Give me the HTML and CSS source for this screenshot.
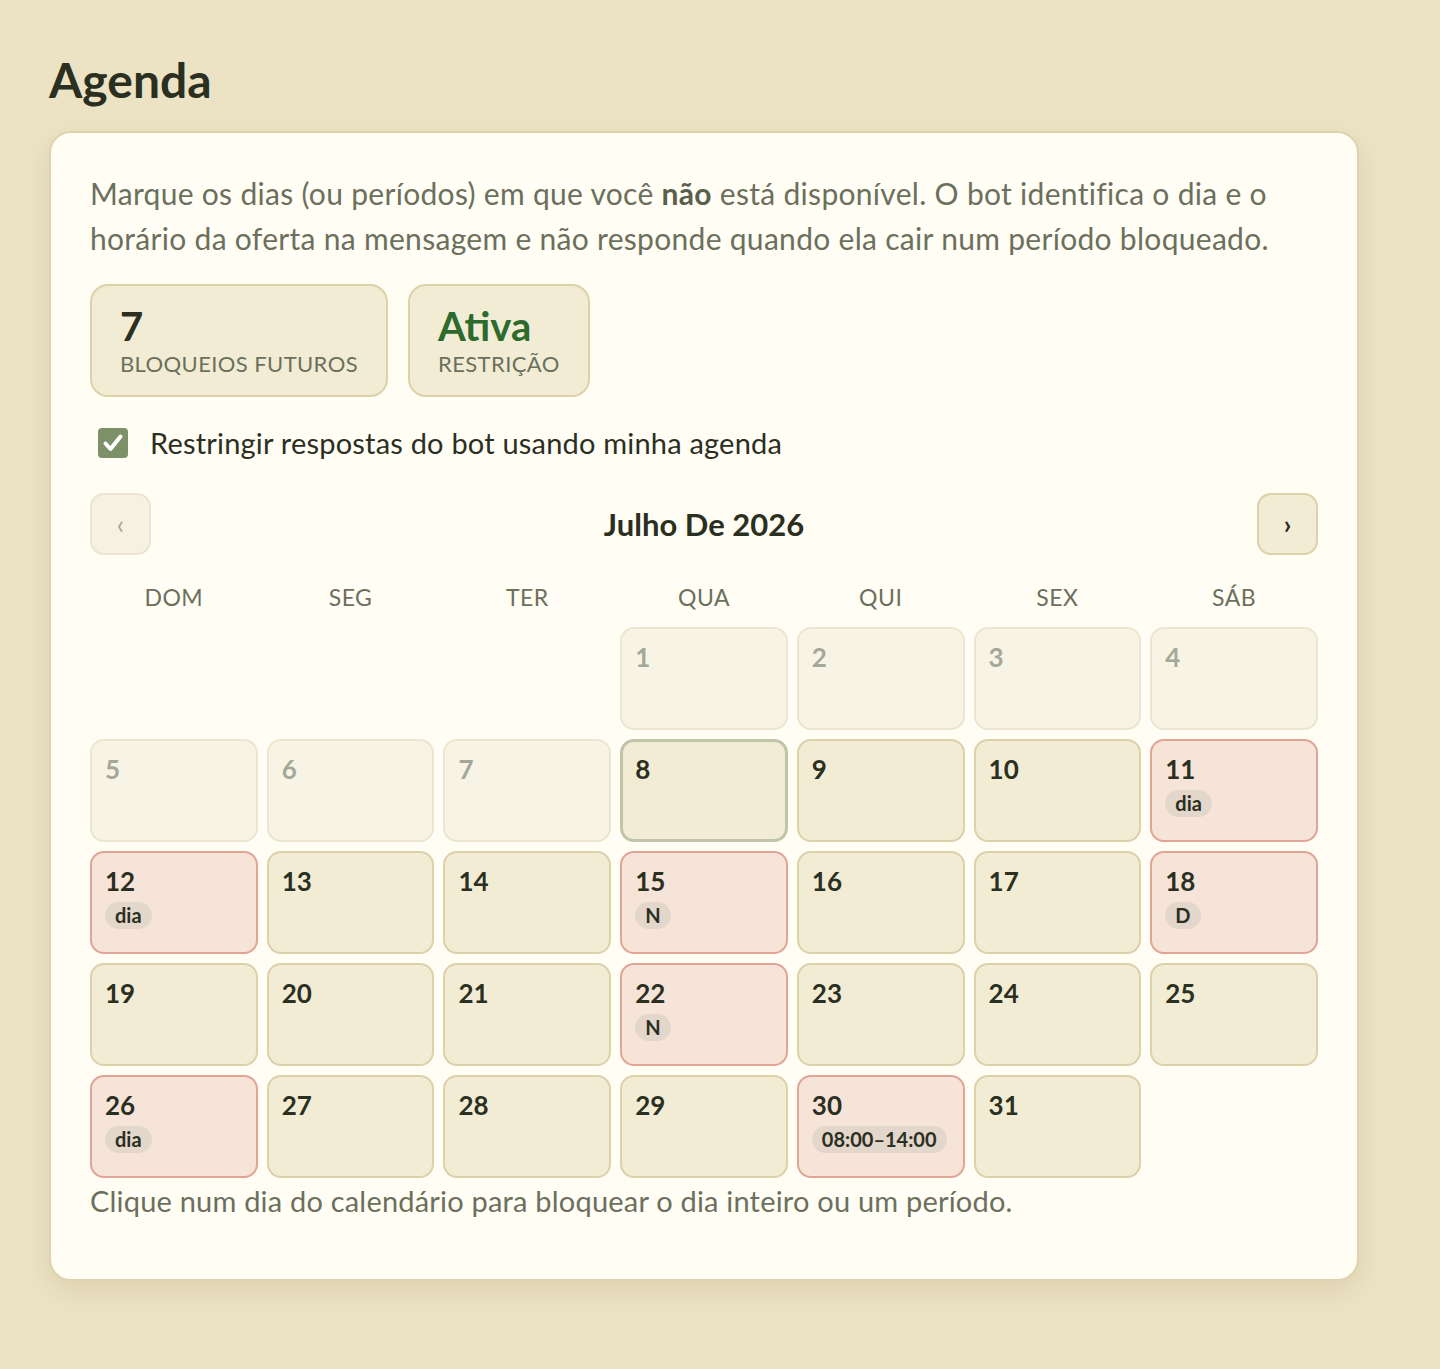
FILE: index.html
```html
<!DOCTYPE html>
<html lang="pt-BR">
<head>
<meta charset="utf-8">
<title>Agenda</title>
<link rel="stylesheet" href="styles.css">
</head>
<body>
<main class="page">
  <h1 class="title">Agenda</h1>
  <section class="card">
    <p class="desc">Marque os dias (ou períodos) em que você <strong>não</strong> está disponível. O bot identifica o dia e o horário da oferta na mensagem e não responde quando ela cair num período bloqueado.</p>
    <div class="stats">
      <div class="stat"><div class="stat-value">7</div><div class="stat-label">Bloqueios futuros</div></div>
      <div class="stat"><div class="stat-value green">Ativa</div><div class="stat-label">Restrição</div></div>
    </div>
    <label class="check-row">
      <span class="checkbox"><svg viewBox="0 0 30 30" width="30" height="30"><path d="M7.5 15.5 L12.5 21 L22.5 8.5" fill="none" stroke="#fff" stroke-width="4" stroke-linecap="round" stroke-linejoin="round"/></svg></span>
      <span class="check-text">Restringir respostas do bot usando minha agenda</span>
    </label>
    <div class="nav">
      <button class="nav-btn disabled">‹</button>
      <div class="month">Julho De 2026</div>
      <button class="nav-btn">›</button>
    </div>
    <div class="weekdays">
      <div>DOM</div><div>SEG</div><div>TER</div><div>QUA</div><div>QUI</div><div>SEX</div><div>SÁB</div>
    </div>
    <div class="grid">
      <div class="blank"></div><div class="blank"></div><div class="blank"></div>
      <div class="day past"><span class="num">1</span></div>
      <div class="day past"><span class="num">2</span></div>
      <div class="day past"><span class="num">3</span></div>
      <div class="day past"><span class="num">4</span></div>
      <div class="day past"><span class="num">5</span></div>
      <div class="day past"><span class="num">6</span></div>
      <div class="day past"><span class="num">7</span></div>
      <div class="day today"><span class="num">8</span></div>
      <div class="day"><span class="num">9</span></div>
      <div class="day"><span class="num">10</span></div>
      <div class="day blocked"><span class="num">11</span><span class="tag">dia</span></div>
      <div class="day blocked"><span class="num">12</span><span class="tag">dia</span></div>
      <div class="day"><span class="num">13</span></div>
      <div class="day"><span class="num">14</span></div>
      <div class="day blocked"><span class="num">15</span><span class="tag">N</span></div>
      <div class="day"><span class="num">16</span></div>
      <div class="day"><span class="num">17</span></div>
      <div class="day blocked"><span class="num">18</span><span class="tag">D</span></div>
      <div class="day"><span class="num">19</span></div>
      <div class="day"><span class="num">20</span></div>
      <div class="day"><span class="num">21</span></div>
      <div class="day blocked"><span class="num">22</span><span class="tag">N</span></div>
      <div class="day"><span class="num">23</span></div>
      <div class="day"><span class="num">24</span></div>
      <div class="day"><span class="num">25</span></div>
      <div class="day blocked"><span class="num">26</span><span class="tag">dia</span></div>
      <div class="day"><span class="num">27</span></div>
      <div class="day"><span class="num">28</span></div>
      <div class="day"><span class="num">29</span></div>
      <div class="day blocked"><span class="num">30</span><span class="tag">08:00–14:00</span></div>
      <div class="day"><span class="num">31</span></div>
    </div>
    <p class="hint">Clique num dia do calendário para bloquear o dia inteiro ou um período.</p>
  </section>
</main>
</body>
</html>
```

FILE: styles.css
```css
* { box-sizing: border-box; }
html, body { margin: 0; padding: 0; }
body {
  background: #ece3c5;
  font-family: "Lato", "Noto Sans", sans-serif;
  color: #2b2f1f;
  min-height: 1369px;
}
.page {
  padding: 52px 81px 60px 49px;
}
.title {
  margin: 0 0 23px 0;
  font-size: 48px;
  line-height: 56px;
  font-weight: 700;
  color: #2b2f1f;
}
.card {
  background: #fffdf4;
  border: 2px solid #ddd3ae;
  border-radius: 22px;
  padding: 38px 39px 56px 39px;
  box-shadow: 0 10px 28px rgba(150, 130, 70, 0.18);
}
.desc {
  margin: 0;
  font-size: 30px;
  line-height: 45px;
  letter-spacing: 0.3px;
  color: #6b705c;
}
.desc strong { color: #5a5f4c; font-weight: 700; }
.stats {
  display: flex;
  gap: 20px;
  margin-top: 23px;
}
.stat {
  background: #f3ecd5;
  border: 2px solid #dcd2a8;
  border-radius: 18px;
  padding: 17px 28px 16px 28px;
  height: 113px;
}
.stat-value {
  font-size: 40px;
  line-height: 46px;
  font-weight: 700;
  color: #2b2f1f;
}
.stat-value.green { color: #2d6a2e; }
.stat-label {
  font-size: 22px;
  line-height: 30px;
  text-transform: uppercase;
  letter-spacing: 0.4px;
  color: #6b705c;
}
.check-row {
  display: flex;
  align-items: center;
  gap: 22px;
  margin-top: 29px;
  padding-left: 8px;
}
.checkbox {
  width: 30px;
  height: 30px;
  border-radius: 4px;
  background: #7d9169;
  display: block;
}
.checkbox svg { display: block; }
.check-text {
  font-size: 29px;
  line-height: 34px;
  letter-spacing: 0.2px;
  color: #2b2f1f;
}
.nav {
  display: flex;
  align-items: center;
  justify-content: space-between;
  margin-top: 33px;
}
.nav-btn {
  width: 61px;
  height: 62px;
  border-radius: 14px;
  border: 2px solid #dcd2a8;
  background: #f3ecd5;
  font-family: "Lato", sans-serif;
  font-size: 26px;
  font-weight: 700;
  color: #2b2f1f;
  padding: 0;
}
.nav-btn.disabled {
  background: #f6f2e3;
  border-color: #ece6cf;
  color: #a4a897;
  font-weight: 400;
}
.month {
  font-size: 31px;
  font-weight: 700;
  color: #2b2f1f;
}
.weekdays {
  display: grid;
  grid-template-columns: repeat(7, 1fr);
  gap: 9px;
  margin-top: 27px;
  margin-bottom: 15px;
  text-align: center;
  font-size: 23px;
  line-height: 30px;
  color: #6b705c;
  letter-spacing: 0.5px;
}
.grid {
  display: grid;
  grid-template-columns: repeat(7, 1fr);
  grid-auto-rows: 103px;
  gap: 9px;
}
.day {
  background: #f3ecd5;
  border: 2px solid #dcd2a8;
  border-radius: 14px;
  padding: 10px 13px;
  display: flex;
  flex-direction: column;
  align-items: flex-start;
}
.num {
  font-size: 26px;
  line-height: 36px;
  font-weight: 700;
  color: #2b2f1f;
}
.day.past {
  background: #f7f4e6;
  border-color: #ece6cf;
}
.day.past .num { color: #a4a897; }
.day.today {
  border: 3px solid #c0c5aa;
  padding: 9px 12px;
}
.day.blocked {
  background: #f7e4d9;
  border-color: #e2a595;
}
.tag {
  margin-top: 3px;
  background: #e3d6cb;
  border-radius: 14px;
  padding: 0 10px;
  height: 27px;
  line-height: 27px;
  font-size: 20px;
  font-weight: 700;
  color: #2b2f1f;
}
.hint {
  margin: 0;
  font-size: 29px;
  line-height: 45px;
  letter-spacing: 0.2px;
  color: #6b705c;
}
```
